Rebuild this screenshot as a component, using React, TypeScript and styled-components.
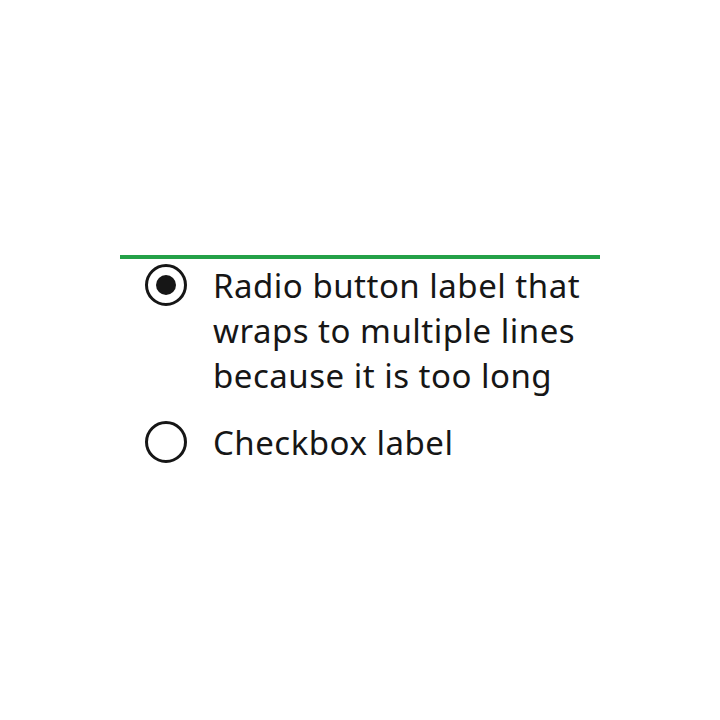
import React from "react";
import styled, { createGlobalStyle } from "styled-components";

const Global = createGlobalStyle`
  html, body { margin: 0; padding: 0; background: #ffffff; }
  body { font-family: "Noto Sans", "Open Sans", sans-serif; color: #161616; }
`;

const Page = styled.div`
  width: 720px;
  height: 720px;
  display: flex;
  align-items: center;
  justify-content: center;
`;

const Group = styled.fieldset`
  width: 480px;
  margin: 0;
  padding: 4px 0 0 25px;
  border: none;
  border-top: 4px solid #24a148;
  box-sizing: border-box;
  display: flex;
  flex-direction: column;
  gap: 22px;
`;

const Item = styled.label`
  display: flex;
  align-items: flex-start;
  gap: 26px;
  cursor: pointer;
`;

const Circle = styled.span<{ $checked?: boolean }>`
  flex: none;
  width: 42px;
  height: 42px;
  margin-top: 1px;
  box-sizing: border-box;
  border: 3px solid #161616;
  border-radius: 50%;
  display: flex;
  align-items: center;
  justify-content: center;
  &::after {
    content: "";
    width: 20px;
    height: 20px;
    border-radius: 50%;
    background: #161616;
    display: ${(p) => (p.$checked ? "block" : "none")};
  }
`;

const Text = styled.span`
  font-size: 33px;
  line-height: 45px;
  letter-spacing: 0.5px;
  color: #161616;
`;

export default function App() {
  return (
    <>
      <Global />
      <Page>
        <Group>
          <Item>
            <Circle $checked />
            <Text>Radio button label that wraps to multiple lines because it is too long</Text>
          </Item>
          <Item>
            <Circle />
            <Text>Checkbox label</Text>
          </Item>
        </Group>
      </Page>
    </>
  );
}
